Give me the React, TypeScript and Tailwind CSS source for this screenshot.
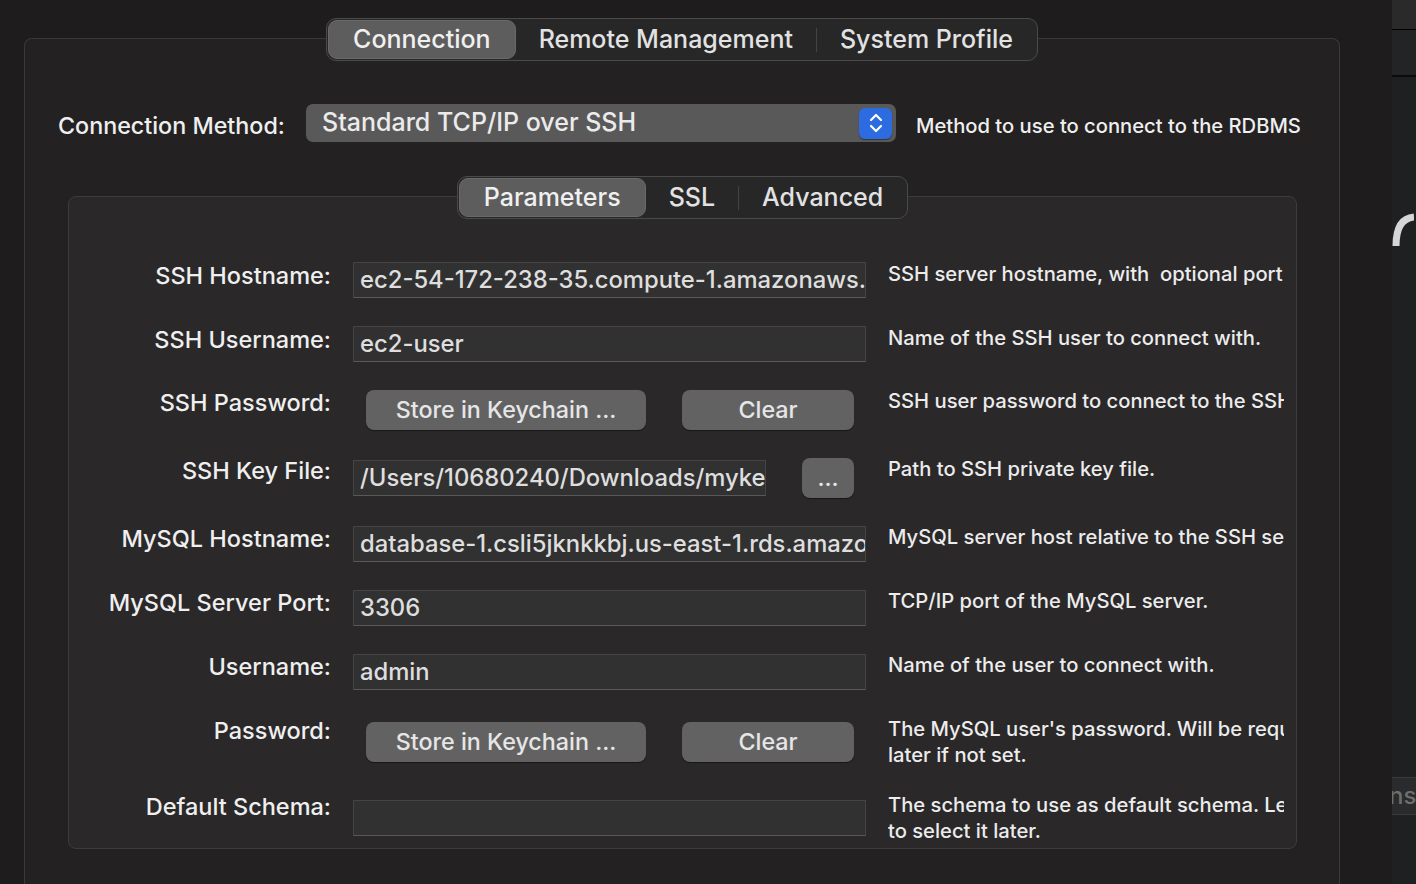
import { Fragment } from 'react'
import type { ReactNode } from 'react'

function Segmented({ items, active }: { items: string[]; active: number }) {
  return (
    <div className="relative mx-auto -mt-[21px] flex h-[43px] w-fit items-center rounded-[10px] border border-[#4b4a4b] bg-[#282728] p-px text-[25px] leading-none">
      {items.map((t, i) => (
        <Fragment key={t}>
          {i > 0 && i !== active && i - 1 !== active ? <div className="h-[24px] w-px bg-[#444344]" /> : null}
          <div
            className={
              i === active
                ? 'flex h-full items-center rounded-[9px] border border-[#6a696a] bg-[#5e5d5e] px-[24px] text-[#f0f0f0]'
                : 'flex h-full items-center px-[23px] text-[#e2e2e2]'
            }
          >
            {t}
          </div>
        </Fragment>
      ))}
    </div>
  )
}

function Field({ value, w }: { value: string; w: string }) {
  return (
    <div className={`flex h-[36px] ${w} items-center overflow-hidden whitespace-nowrap border border-[#454445] border-b-[#5a595a] bg-[#323132] pl-[6px] text-[23.8px] text-[#dedede]`}>
      {value}
    </div>
  )
}

function Btn({ children, w }: { children: ReactNode; w: string }) {
  return (
    <div className={`flex h-[40px] ${w} shrink-0 items-center justify-center rounded-[8px] bg-[#636263] text-[23.3px] text-[#e6e6e6] shadow-[0_1px_1px_rgba(0,0,0,0.45)]`}>
      {children}
    </div>
  )
}

function KeychainButtons() {
  return (
    <div className="ml-[13px] flex gap-[36px]">
      <Btn w="w-[280px]">Store in Keychain ...</Btn>
      <Btn w="w-[172px]">Clear</Btn>
    </div>
  )
}

function Row({ label, h, cm, desc, children }: { label: string; h: string; cm: string; desc: string[]; children: ReactNode }) {
  return (
    <div className={`flex items-start ${h}`}>
      <div className="w-[262px] shrink-0 text-right text-[23.5px] leading-[24px] text-[#efefef]">{label}</div>
      <div className={`ml-[22px] w-[513px] shrink-0 ${cm}`}>{children}</div>
      <div className="ml-[22px] -mt-[3px] w-[396px] shrink-0 overflow-hidden whitespace-pre text-[20.2px] leading-[26px] text-[#ececec]">
        {desc.map((d) => <div key={d}>{d}</div>)}
      </div>
    </div>
  )
}

function Stepper() {
  return (
    <div className="flex h-[31px] w-[33px] items-center justify-center rounded-[6px] bg-[#2c6be0] shadow-[0_1px_1px_rgba(0,0,0,0.4)]">
      <svg width="14" height="22" viewBox="0 0 14 22" fill="none" stroke="white" strokeWidth="2.2" strokeLinecap="round" strokeLinejoin="round">
        <path d="M2 8 L7 3 L12 8" />
        <path d="M2 14 L7 19 L12 14" />
      </svg>
    </div>
  )
}

function RightStrip() {
  return (
    <div className="flex w-[24px] shrink-0">
      <div className="w-[2px] bg-[#4a4a4a]" />
      <div className="flex flex-1 flex-col bg-[#1f2021]">
        <div className="h-[30px] border-b border-black bg-[#2a2a2b]" />
        <div className="h-[47px] border-b-2 border-[#0c0c0c] bg-[#232425]" />
        <svg className="mt-[133px]" width="22" height="36" viewBox="0 0 22 36" fill="none">
          <path d="M4 36 C4 18 10 8 22 7" stroke="#d6d6d6" strokeWidth="7" />
        </svg>
        <div className="mt-[531px] flex h-[38px] items-center overflow-hidden border-y border-[#3a3b3c] bg-[#2a2b2c] text-[24px] text-[#6e6e6e]">
          <span className="-ml-[3px]">ns</span>
        </div>
      </div>
    </div>
  )
}

export default function App() {
  return (
    <div className="flex h-[884px] w-[1416px] overflow-hidden bg-[#1e1c1d] font-[Inter,sans-serif] font-medium antialiased">
      <div className="w-[1392px] shrink-0 pl-[24px] pt-[38px]">
        <div className="h-[880px] w-[1316px] rounded-t-[8px] border border-b-0 border-[#3a3839] bg-[#232122]">
          <Segmented items={['Connection', 'Remote Management', 'System Profile']} active={0} />

          <div className="mt-[43px] flex h-[38px] items-center">
            <div className="ml-[33px] mt-[6px] w-[248px] shrink-0 text-[23.3px] text-[#efefef]">Connection Method:</div>
            <div className="flex h-[38px] w-[590px] shrink-0 items-center rounded-[7px] bg-[#5a595a] pl-[16px] pr-[4px]">
              <span className="flex-1 text-[25px] text-[#ebebeb]">Standard TCP/IP over SSH</span>
              <Stepper />
            </div>
            <div className="ml-[20px] mt-[6px] whitespace-nowrap text-[20.2px] text-[#efefef]">Method to use to connect to the RDBMS</div>
          </div>

          <div className="ml-[43px] mt-[54px] w-[1229px] rounded-[8px] border border-[#3d3c3d] bg-[#2a2829]">
            <Segmented items={['Parameters', 'SSL', 'Advanced']} active={0} />
            <div className="mt-[45px] flex flex-col">
              <Row label="SSH Hostname:" h="h-[64px]" cm="-mt-[2px]" desc={['SSH server hostname, with  optional port']}>
                <Field w="w-[513px]" value="ec2-54-172-238-35.compute-1.amazonaws.com" />
              </Row>
              <Row label="SSH Username:" h="h-[63px]" cm="-mt-[2px]" desc={['Name of the SSH user to connect with.']}>
                <Field w="w-[513px]" value="ec2-user" />
              </Row>
              <Row label="SSH Password:" h="h-[68px]" cm="-mt-px" desc={['SSH user password to connect to the SSH host.']}>
                <KeychainButtons />
              </Row>
              <Row label="SSH Key File:" h="h-[68px]" cm="-mt-px" desc={['Path to SSH private key file.']}>
                <div className="flex items-center">
                  <Field w="w-[413px]" value="/Users/10680240/Downloads/mykey.pem" />
                  <Btn w="ml-[36px] w-[52px]">...</Btn>
                </div>
              </Row>
              <Row label="MySQL Hostname:" h="h-[64px]" cm="-mt-px" desc={['MySQL server host relative to the SSH server.']}>
                <Field w="w-[513px]" value="database-1.csli5jknkkbj.us-east-1.rds.amazonaws.com" />
              </Row>
              <Row label="MySQL Server Port:" h="h-[64px]" cm="-mt-px" desc={['TCP/IP port of the MySQL server.']}>
                <Field w="w-[513px]" value="3306" />
              </Row>
              <Row label="Username:" h="h-[64px]" cm="-mt-px" desc={['Name of the user to connect with.']}>
                <Field w="w-[513px]" value="admin" />
              </Row>
              <Row label="Password:" h="h-[76px]" cm="mt-[3px]" desc={["The MySQL user's password. Will be requested", 'later if not set.']}>
                <KeychainButtons />
              </Row>
              <Row label="Default Schema:" h="h-[53px]" cm="mt-[5px]" desc={['The schema to use as default schema. Leave blank', 'to select it later.']}>
                <Field w="w-[513px]" value="" />
              </Row>
            </div>
          </div>
        </div>
      </div>
      <RightStrip />
    </div>
  )
}
